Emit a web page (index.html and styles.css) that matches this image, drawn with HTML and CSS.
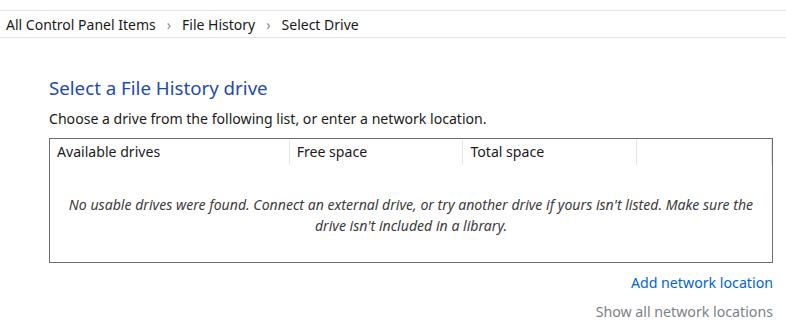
FILE: index.html
```html
<!DOCTYPE html>
<html lang="en">
<head>
    <meta charset="UTF-8">
    <title>Select Drive</title>
    <link rel="stylesheet" href="styles.css">
</head>
<body>
    <div class="breadcrumb">
        <span>All Control Panel Items</span>
        <span class="sep">&#8250;</span>
        <span>File History</span>
        <span class="sep">&#8250;</span>
        <span>Select Drive</span>
    </div>

    <div class="content">
        <h1 class="title">Select a File History drive</h1>
        <p class="intro">Choose a drive from the following list, or enter a network location.</p>

        <div class="drive-list">
            <div class="list-header">
                <div class="col col-name">Available drives</div>
                <div class="col col-free">Free space</div>
                <div class="col col-total">Total space</div>
                <div class="col col-rest"></div>
            </div>
            <p class="empty-msg">No usable drives were found. Connect an external drive, or try another drive if yours isn't listed. Make sure the drive isn't included in a library.</p>
        </div>

        <div class="links">
            <a href="#" class="link">Add network location</a>
            <a href="#" class="link link-muted">Show all network locations</a>
        </div>
    </div>
</body>
</html>
```

FILE: styles.css
```css
body {
    font-family: "Noto Sans", "Open Sans", sans-serif;
    margin: 0;
    padding: 0;
    background: #ffffff;
    color: #1a1a1a;
    font-size: 14.1px;
}
.breadcrumb {
    margin-top: 10px;
    height: 26px;
    border-top: 1px solid #e3e3e3;
    border-bottom: 1px solid #e3e3e3;
    display: flex;
    align-items: center;
    gap: 10px;
    padding-left: 6px;
    font-size: 14px;
    color: #1a1a1a;
}
.breadcrumb .sep {
    color: #8a8a8a;
    padding: 0 1px;
}
.content {
    padding: 0 13px 0 49px;
}
.title {
    margin: 37px 0 0 0;
    font-size: 18.7px;
    font-weight: 400;
    color: #1e4ab0;
    line-height: 26px;
}
.intro {
    margin: 8px 0 0 0;
    line-height: 20px;
}
.drive-list {
    margin-top: 9px;
    height: 123px;
    border: 1px solid #6e6e6e;
}
.list-header {
    display: flex;
    height: 26px;
}
.col {
    padding: 3px 7px 0 7px;
    border-right: 1px solid #e5e5e5;
    line-height: 20px;
}
.col-name {
    width: 225px;
}
.col-free,
.col-total {
    width: 159px;
}
.col-rest {
    width: 120px;
}
.empty-msg {
    margin: 29px 6px 0 6px;
    text-align: center;
    font-style: italic;
    color: #3c3c3c;
    font-size: 14.1px;
    line-height: 21px;
}
.links {
    display: flex;
    flex-direction: column;
    align-items: flex-end;
    margin-top: 10px;
    gap: 9px;
}
.link {
    color: #0066cc;
    text-decoration: none;
    line-height: 20px;
    font-size: 14.2px;
}
.link-muted {
    color: #7d8288;
}
```
